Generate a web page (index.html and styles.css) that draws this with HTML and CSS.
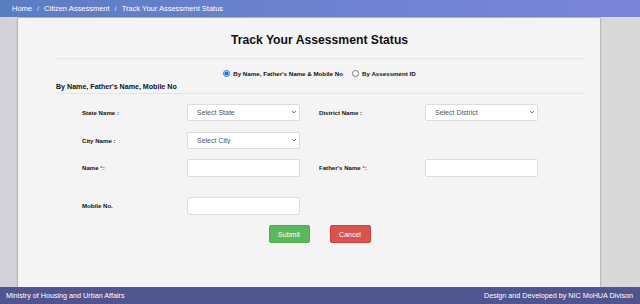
FILE: index.html
```html
<!DOCTYPE html>
<html lang="en">
<head>
    <meta charset="UTF-8">
    <meta name="viewport" content="width=device-width, initial-scale=1.0">
    <title>Track Your Assessment Status</title>
    <link rel="stylesheet" href="styles.css">
</head>
<body>
    <nav class="breadcrumb">
        <a href="#">Home</a>
        <span class="sep">/</span>
        <a href="#">Citizen Assessment</a>
        <span class="sep">/</span>
        <span>Track Your Assessment Status</span>
    </nav>

    <main class="page">
        <div class="card">
            <h1>Track Your Assessment Status</h1>
            <div class="rule"></div>

            <div class="search-type">
                <label class="radio"><input type="radio" name="searchType" checked> By Name, Father's Name &amp; Mobile No</label>
                <label class="radio"><input type="radio" name="searchType"> By Assessment ID</label>
            </div>

            <h2 class="section-title">By Name, Father's Name, Mobile No</h2>

            <form class="form" id="trackForm">
                <div class="row row-first">
                    <label class="field-label">State Name :</label>
                    <div class="select-wrap">
                        <select class="control"><option>Select State</option></select>
                        <svg class="chevron" viewBox="0 0 10 10"><path d="M2 3.5 L5 6.5 L8 3.5" fill="none" stroke="#444" stroke-width="1.4"/></svg>
                    </div>
                    <label class="field-label">District Name :</label>
                    <div class="select-wrap">
                        <select class="control"><option>Select District</option></select>
                        <svg class="chevron" viewBox="0 0 10 10"><path d="M2 3.5 L5 6.5 L8 3.5" fill="none" stroke="#444" stroke-width="1.4"/></svg>
                    </div>
                </div>
                <div class="row">
                    <label class="field-label">City Name :</label>
                    <div class="select-wrap">
                        <select class="control"><option>Select City</option></select>
                        <svg class="chevron" viewBox="0 0 10 10"><path d="M2 3.5 L5 6.5 L8 3.5" fill="none" stroke="#444" stroke-width="1.4"/></svg>
                    </div>
                </div>
                <div class="row row-spaced">
                    <label class="field-label">Name <span class="req">*</span>:</label>
                    <input type="text" class="control text-input">
                    <label class="field-label">Father's Name <span class="req">*</span>:</label>
                    <input type="text" class="control text-input">
                </div>
                <div class="row">
                    <label class="field-label">Mobile No.</label>
                    <input type="text" class="control text-input">
                </div>
            </form>

            <div class="actions">
                <button type="submit" form="trackForm" class="btn btn-submit">Submit</button>
                <button type="button" class="btn btn-cancel">Cancel</button>
            </div>
        </div>
    </main>

    <footer class="footer">
        <span>Ministry of Housing and Urban Affairs</span>
        <span>Design and Developed by NIC MoHUA Divison</span>
    </footer>
</body>
</html>
```

FILE: styles.css
```css
body {
    margin: 0;
    height: 304px;
    display: flex;
    flex-direction: column;
    font-family: 'Liberation Sans', Arial, sans-serif;
    background: linear-gradient(90deg, #d2d2d8 0%, #d8d8dc 50%, #d9d9d9 100%);
    color: #222;
    overflow: hidden;
}

.breadcrumb {
    height: 17px;
    flex-shrink: 0;
    display: flex;
    align-items: center;
    gap: 4px;
    padding-left: 12px;
    background: linear-gradient(90deg, #5b7dc4 0%, #6c82d0 50%, #7c85da 100%);
    color: #fff;
    font-size: 7.5px;
}

.breadcrumb a {
    color: #fff;
    text-decoration: none;
}

.breadcrumb .sep {
    color: #dfe3f5;
    padding: 0 1px;
}

.page {
    flex: 1;
    display: flex;
    padding: 1px 40px 0 18px;
    min-height: 0;
}

.card {
    flex: 1;
    background-color: #f4f4f4;
    box-shadow: 0 0 2px rgba(0, 0, 0, 0.45);
    padding: 0 17px 0 38px;
}

h1 {
    margin: 15px 0 0;
    font-size: 12.2px;
    line-height: 14px;
    text-align: center;
    color: #111;
}

.rule {
    margin-top: 11px;
    border-top: 1px solid #e3e3e3;
}

.search-type {
    margin-top: 9px;
    height: 10px;
    display: flex;
    justify-content: center;
    gap: 9px;
    font-size: 6.2px;
    font-weight: bold;
    color: #111;
}

.radio {
    display: flex;
    align-items: center;
    gap: 3px;
}

.radio input {
    width: 7px;
    height: 7px;
    margin: 0;
    accent-color: #1a73e8;
}

.section-title {
    margin: 5px 0 0;
    padding-bottom: 1px;
    font-size: 7.1px;
    line-height: 9px;
    border-bottom: 1px solid #e3e3e3;
    color: #111;
}

.form {
    display: flex;
    flex-direction: column;
    gap: 10px;
    padding: 10px 0 0 26px;
}

.row {
    display: grid;
    grid-template-columns: 105px 113px 125px 113px;
    align-items: center;
}

.row > :nth-child(3) {
    margin-left: 19px;
}

.row-first {
    margin-bottom: 1px;
}

.row-spaced {
    margin-bottom: 10px;
}

.field-label {
    font-size: 6.1px;
    line-height: 8px;
    font-weight: bold;
    color: #111;
}

.req {
    color: #e33;
}

.select-wrap {
    position: relative;
    display: flex;
}

.control {
    box-sizing: border-box;
    width: 100%;
    height: 17px;
    margin: 0;
    border: 1px solid #dcdcdc;
    border-radius: 2px;
    background-color: #fff;
    font-family: inherit;
    font-size: 7px;
    color: #555;
    padding: 0 0 0 9px;
}

.text-input {
    height: 18px;
}

select.control {
    appearance: none;
    -webkit-appearance: none;
}

.chevron {
    position: absolute;
    right: 3px;
    top: 5px;
    width: 6px;
    height: 6px;
    pointer-events: none;
}

.actions {
    display: flex;
    justify-content: center;
    gap: 20px;
    margin-top: 10px;
}

.btn {
    width: 41px;
    height: 18px;
    border: 1px solid transparent;
    border-radius: 2px;
    color: #fff;
    font-family: inherit;
    font-size: 7px;
    cursor: pointer;
    padding: 0;
}

.btn-submit {
    background-color: #5cb85c;
    border-color: #4cae4c;
}

.btn-cancel {
    background-color: #d9534f;
    border-color: #d43f3a;
}

.footer {
    height: 17px;
    flex-shrink: 0;
    display: flex;
    justify-content: space-between;
    align-items: center;
    padding: 0 7px 0 6px;
    background-color: #50558f;
    color: #fff;
    font-size: 7.2px;
}
```
